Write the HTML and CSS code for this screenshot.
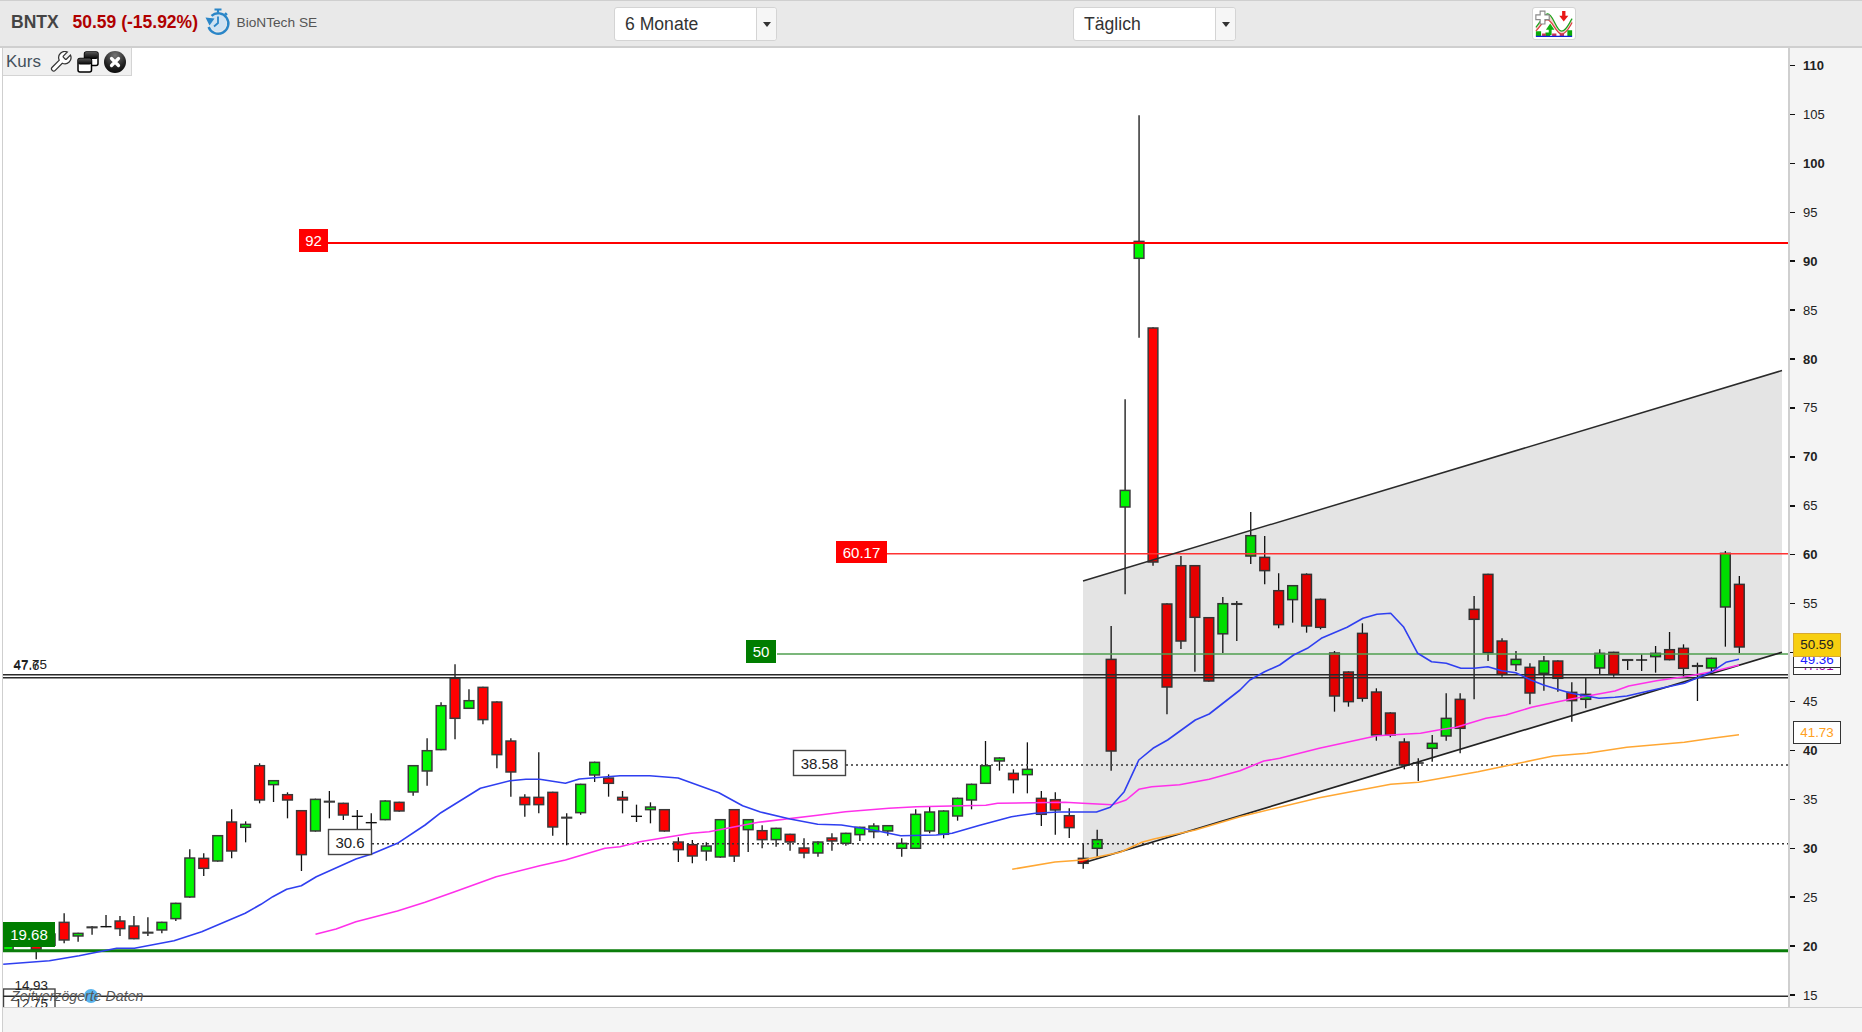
FILE: index.html
```html
<!DOCTYPE html>
<html lang="de">
<head>
<meta charset="utf-8">
<title>BNTX</title>
<link rel="stylesheet" href="styles.css">
</head>
<body>
<div class="app">
  <header class="topbar">
    <div class="quote">
      <b class="symbol">BNTX</b>
      <b class="price">50.59 (-15.92%)</b>
      <svg class="watch" viewBox="0 0 26 28" aria-hidden="true">
        <circle class="watch-face" cx="13" cy="15" r="8.5"/>
        <path class="watch-ring" d="M6.5 7.8A10.2 10.2 0 1 1 3.6 19"/>
        <path class="watch-hand" d="M13 8.5V15L9 18.5"/>
        <path class="watch-knob" d="M9.5 1.5h7M13 1.5v3M20 5l2 2"/>
        <path class="watch-arrow" d="M0.5 9.5L9.5 10.5 4.5 17.5z"/>
      </svg>
      <span class="company">BioNTech SE</span>
    </div>
    <div class="select"><span class="select-text">6 Monate</span><span class="select-arrow"></span></div>
    <div class="select select-second"><span class="select-text">Täglich</span><span class="select-arrow"></span></div>
    <div class="toolbtn">
      <svg viewBox="0 0 44 32" aria-hidden="true">
        <path class="ti-band" d="M3 20C8 14 11 7 15 6 21 5 24 24 30 24 35 24 38 15 41 11L41 15C38 20 35 27 30 27 24 27 21 13 15 12 11 12 8 19 3 24z"/>
        <path class="ti-green" d="M3 20C8 14 11 7 15 6 21 5 24 24 30 24 35 24 38 15 41 11"/>
        <path class="ti-red" d="M3 24C8 19 11 12 15 12 21 13 24 27 30 27 35 27 38 20 41 15"/>
        <path class="ti-cross" d="M7.500 3h5v4h4.500v5h-4.500v4.500h-5V12H3V7h4.500z"/>
        <path class="ti-down" d="M30.500 3h3.500v5h3L32.200 14 27.500 8h3z"/>
        <path class="ti-up" d="M16.500 28v-5.500h-3l4.500-6.500 4.500 6.500h-3V28z"/>
        <path class="ti-bar-g" d="M3 24h5.500v5H3zM13 25.500h5V29h-5zM36 23h5v6h-5z"/>
        <path class="ti-bar-r" d="M9.500 26.500h4V29h-4zM20 26.500h4.500V29H20zM28 26.500h4.500V29H28z"/>
        <path class="ti-base" d="M3 29.500h38"/>
      </svg>
    </div>
  </header>

  <main class="main">
    <section class="plot">
      <div class="panel-tools">
        <span class="panel-name">Kurs</span>
        <svg class="tool-icon" viewBox="1.500 1.500 21.500 21.500" aria-hidden="true"><path class="wrench" d="M14.7 6.3a1 1 0 0 0 0 1.4l1.6 1.6a1 1 0 0 0 1.4 0l3.77-3.77a6 6 0 0 1-7.94 7.94l-6.91 6.91a2.12 2.12 0 0 1-3-3l6.91-6.91a6 6 0 0 1 7.94-7.94l-3.76 3.76z"/></svg>
        <svg class="tool-icon" viewBox="0 0 22 22" aria-hidden="true">
          <defs>
            <linearGradient id="winTop" x1="0" y1="0" x2="0" y2="1"><stop offset="0" stop-color="#555"/><stop offset="1" stop-color="#000"/></linearGradient>
            <radialGradient id="closeBg" cx="0.5" cy="0.2" r="0.9"><stop offset="0" stop-color="#777"/><stop offset="0.6" stop-color="#222"/><stop offset="1" stop-color="#000"/></radialGradient>
          </defs>
          <rect class="win-frame" x="7.500" y="1" width="13.500" height="13.500" rx="2"/>
          <rect class="win-title" x="7.500" y="1" width="13.500" height="7" rx="2"/>
          <rect class="win-frame" x="1" y="7.500" width="13.500" height="13.500" rx="2"/>
          <rect class="win-title" x="1" y="7.500" width="13.500" height="6" rx="2"/>
        </svg>
        <svg class="tool-icon" viewBox="0 0 22 22" aria-hidden="true">
          <circle class="close-bg" cx="11" cy="11" r="11"/>
          <path class="close-x" d="M7.500 7.500l7 7M14.500 7.500l-7 7"/>
        </svg>
      </div>

      <svg class="chart" viewBox="3 48 1785 959" aria-label="Kursdiagramm">
        <g id="candles"></g>
        <polygon class="channel" points="1083,581 1782,370.500 1782,652.300 1083,863"/>

        <path class="lvl-red-strong" d="M328 243H1788"/>
        <path class="lvl-red-thin" d="M887 553.700H1788"/>
        <path class="lvl-green-thin" d="M777 654H1788"/>
        <path class="lvl-green-strong" d="M3 950.700H1788"/>
        <path class="lvl-black" d="M3 674.800H1788M3 677.800H1788M3 996.300H1788"/>
        <path class="lvl-dot" d="M846 765H1788M372 843.700H1788"/>
        <path class="trend" d="M1083 581L1782 370.500"/>
        <path class="trend trend-low" d="M1083 863L1782 652.300"/>

        <polyline id="ind-orange" class="ind ind-orange"/>
        <polyline id="ind-magenta" class="ind ind-magenta"/>
        <polyline id="ind-blue" class="ind ind-blue"/>

        <rect class="tag-red" x="299" y="229" width="29" height="23"/>
        <text class="tag-text tag-white" x="313.500" y="246">92</text>
        <rect class="tag-red" x="836" y="541" width="51" height="22"/>
        <text class="tag-text tag-white" x="861.500" y="557.500">60.17</text>
        <rect class="tag-green" x="746" y="640" width="30" height="23"/>
        <text class="tag-text tag-white" x="761" y="657">50</text>
        <rect class="tag-green" x="3" y="922" width="52" height="25"/>
        <text class="tag-text tag-white" x="29" y="940">19.68</text>
        <rect class="tag-box" x="793.500" y="750.500" width="52" height="25"/>
        <text class="tag-text" x="819.500" y="768.500">38.58</text>
        <rect class="tag-box" x="328.500" y="829.500" width="43" height="25"/>
        <text class="tag-text" x="350" y="847.500">30.6</text>

        <text class="low-text" x="13.500" y="668.500">47.75</text>
        <text class="low-text" x="13.500" y="670">47.6</text>

        <rect class="tag-box" x="3.500" y="989" width="51.500" height="30"/>
        <path class="lvl-black" d="M3 996.300H55"/>
        <text class="low-text" x="14.500" y="990">14.93</text>
        <text class="low-text" x="14.500" y="1007.500">12.75</text>
        <circle class="info-dot" cx="91" cy="996" r="7"/>
        <text class="delay-text" x="11" y="1000.800">Zeitverzögerte Daten</text>
      </svg>
    </section>

    <aside class="axis">
      <ul class="ticks">
        <li class="tick major">110</li>
        <li class="tick">105</li>
        <li class="tick major">100</li>
        <li class="tick">95</li>
        <li class="tick major">90</li>
        <li class="tick">85</li>
        <li class="tick major">80</li>
        <li class="tick">75</li>
        <li class="tick major">70</li>
        <li class="tick">65</li>
        <li class="tick major">60</li>
        <li class="tick">55</li>
        <li class="tick major">50</li>
        <li class="tick">45</li>
        <li class="tick major">40</li>
        <li class="tick">35</li>
        <li class="tick major">30</li>
        <li class="tick">25</li>
        <li class="tick major">20</li>
        <li class="tick">15</li>
      </ul>
      <div class="ptag ptag-purple">47.91</div>
      <div class="ptag ptag-blue">49.36</div>
      <div class="ptag ptag-gold">50.59</div>
      <div class="ptag ptag-orange">41.73</div>
    </aside>
  </main>

  <footer class="footer"></footer>
</div>
<script src="chart.js"></script>
</body>
</html>
```
FILE: styles.css
```css
* { box-sizing: border-box; }
html, body { margin: 0; padding: 0; background: #fff; }
body { font-family: "Liberation Sans", Arial, sans-serif; color: #333; overflow: hidden; }
.app { width: 1862px; height: 1032px; display: flex; flex-direction: column; }

.topbar {
  height: 48px; flex: none; background: #e9e9e9;
  border-top: 1px solid #cfcfcf; border-bottom: 2px solid #cfcfcf;
  display: grid;
  grid-template-columns: 614px 163px 296px 163px 296px 44px;
  grid-template-areas: "q s1 . s2 . b";
  align-items: start;
}
.quote { grid-area: q; display: flex; align-items: center; height: 43px; padding-left: 11px; }
.symbol { font-size: 17.500px; color: #444; width: 61.500px; }
.price { font-size: 17.500px; color: #b00000; white-space: nowrap; width: 133px; }
.watch { width: 26px; height: 28px; flex: none; margin-top: -1px; margin-left: -1px; }
.watch-face { fill: #cfe2f2; }
.watch-ring { fill: none; stroke: #2a86c8; stroke-width: 2.400; }
.watch-hand { fill: none; stroke: #2a86c8; stroke-width: 1.800; }
.watch-knob { fill: none; stroke: #2a86c8; stroke-width: 2.200; }
.watch-arrow { fill: #2a86c8; }
.company { font-size: 13.700px; color: #555; margin-left: 6px; }

.select {
  grid-area: s1; margin-top: 6px; height: 34px; display: flex;
  background: #fff; border: 1px solid #d4d4d4; border-radius: 3px;
  font-size: 17.600px; color: #333;
}
.select-second { grid-area: s2; }
.select-text { width: 141px; padding-left: 10px; line-height: 32px; }
.select-arrow {
  flex: 1; border-left: 1px solid #d4d4d4; background: #f6f6f6; position: relative;
  border-radius: 0 3px 3px 0;
}
.select-arrow::after {
  content: ""; position: absolute; left: 5.500px; top: 14px;
  border-left: 4px solid transparent; border-right: 4px solid transparent; border-top: 5px solid #333;
}

.toolbtn {
  grid-area: b; margin-top: 6px; height: 33px; width: 44px;
  background: #fff; border: 1px solid #d4d4d4; border-radius: 3px;
}
.toolbtn svg { display: block; width: 42px; height: 31px; }
.ti-band { fill: #f6d0d0; }
.ti-green { fill: none; stroke: #1aa51a; stroke-width: 1.300; }
.ti-red { fill: none; stroke: #d84040; stroke-width: 1.300; }
.ti-cross { fill: #fff; stroke: #8a8a8a; stroke-width: 1.200; }
.ti-down { fill: #e81818; }
.ti-up { fill: #10b010; }
.ti-bar-g { fill: #0aa80a; }
.ti-bar-r { fill: #cc3355; }
.ti-base { fill: none; stroke: #1020d8; stroke-width: 1.100; }

.main { flex: 1; display: flex; min-height: 0; padding-left: 2px; background: #fff; }
.plot { position: relative; width: 1786px; flex: none; border-left: 1px solid #cfcfcf; }
.chart { display: block; width: 1785px; height: 959px; overflow: hidden; }

.panel-tools {
  position: absolute; left: 0; top: 0; z-index: 2;
  width: 129px; height: 28px; display: flex; align-items: center;
  background: #f0f0f0; border-right: 1px solid #d4d4d4; border-bottom: 1px solid #d4d4d4;
  padding-left: 3px;
}
.panel-name { font-size: 17px; color: #44505c; width: 46px; }
.tool-icon { width: 22px; height: 22px; flex: none; margin-right: 5px; }
.wrench { fill: #fff; stroke: #333; stroke-width: 1.200; }
.win-frame { fill: #fff; stroke: #000; stroke-width: 1.500; }
.win-title { fill: url(#winTop); }
.close-bg { fill: url(#closeBg); }
.close-x { fill: none; stroke: #fff; stroke-width: 3.200; stroke-linecap: round; }

.channel { fill: rgba(0, 0, 0, 0.105); }
.lvl-red-strong { stroke: #f00; stroke-width: 2; fill: none; }
.lvl-red-thin { stroke: #f33; stroke-width: 1.400; fill: none; }
.lvl-green-thin { stroke: #4f9f4f; stroke-width: 1.600; fill: none; }
.lvl-green-strong { stroke: #0a7d0a; stroke-width: 3; fill: none; }
.lvl-black { stroke: #2a2a2a; stroke-width: 1.400; fill: none; }
.lvl-dot { stroke: #333; stroke-width: 1.500; stroke-dasharray: 2 3; fill: none; }
.trend { stroke: #2a2a2a; stroke-width: 1.500; fill: none; }
.trend-low { stroke-width: 1.700; stroke: #222; }

.ind { fill: none; stroke-width: 1.600; stroke-linejoin: round; }
.ind-blue { stroke: #2f3ff0; }
.ind-magenta { stroke: #ff30ea; }
.ind-orange { stroke: #ffa733; }

.wick { stroke: #111; stroke-width: 1.300; }
.body { stroke: #3a3a3a; stroke-width: 1.500; }
.body-g { fill: #00f800; }
.body-r { fill: #f00; }
.body-w { fill: #fff; }
.doji { stroke: #111; stroke-width: 1.400; }

.tag-red { fill: #f00; }
.tag-green { fill: #007d00; }
.tag-box { fill: #fff; stroke: #444; stroke-width: 1.400; }
.tag-text { font-size: 15px; text-anchor: middle; fill: #222; }
.tag-white { fill: #fff; }
.low-text { font-size: 13.400px; fill: #222; }
.info-dot { fill: #58b4ee; }
.delay-text { font-size: 14.200px; font-style: italic; fill: #555; }

.axis { position: relative; flex: 1; background: #f4f4f4; border-left: 2px solid #cfcfcf; overflow: hidden; }
.ticks { list-style: none; margin: -6.950px 0 0; padding: 0; }
.tick {
  height: 48.930px; display: flex; align-items: center; gap: 8px;
  font-size: 13px; color: #222;
}
.tick::before { content: ""; width: 5px; height: 1.500px; background: #111; }
.tick.major { font-weight: bold; }

.ptag {
  position: absolute; left: 3px; width: 48px; text-align: center;
  font-size: 13.400px; background: #fff; border: 1.500px solid #333;
}
.ptag-purple { top: 607px; height: 20px; line-height: 20px; color: #a000a0; }
.ptag-blue { top: 600px; height: 20px; line-height: 22px; color: #2020ff; }
.ptag-gold { top: 585px; height: 24px; line-height: 21px; color: #222; background: #f7cf10; border-color: #d8a830; }
.ptag-orange { top: 673px; height: 23px; line-height: 21px; color: #ffa020; }

.footer { height: 25px; flex: none; background: #f4f4f4; border-top: 1px solid #cfcfcf; margin-left: 2px; border-left: 1px solid #cfcfcf; }
```
FILE: chart.js
```js
(function () {
  var NS = 'http://www.w3.org/2000/svg';
  var host = document.getElementById('candles');
  var X0 = 8, STEP = 13.96;

  function add(tag, cls, attrs) {
    var el = document.createElementNS(NS, tag);
    el.setAttribute('class', cls);
    for (var k in attrs) el.setAttribute(k, attrs[k]);
    host.appendChild(el);
  }

  // [wickTop, bodyTop, bodyBottom, wickBottom, kind]; y = base + v / k
  var groups = [
    { from: 0, base: 640, k: 3, rows: [
      [905,905,932,932,'g'],[890,890,921,921,'w'],[900,900,930,958,'r'],[880,880,918,918,'w'],
      [820,845,902,910,'r'],[878,878,890,905,'g'],[858,859,863,884,'r'],[825,860,860,862,'k'],
      [828,841,868,888,'r'],[828,856,898,898,'r'],[832,875,878,888,'r'],[845,845,872,880,'g'],
      [788,788,838,843,'g'],[628,652,773,773,'g'],[640,653,687,708,'r'],[585,585,665,665,'g'],
      [508,544,635,655,'r'],[544,551,564,607,'g'],[370,375,482,490,'r'],[420,420,436,486,'g'],
      [457,462,482,535,'r'],[510,510,646,693,'r'],[476,476,575,575,'g'],[453,482,485,535,'r'],
      [488,488,527,540,'r'],[510,529,529,580,'k'],[520,548,548,640,'k'],[481,481,541,541,'g'],
      [485,485,515,515,'r'],[375,375,458,467,'g'],[295,330,395,437,'g'],[187,195,331,331,'g'],
      [73,113,237,298,'r'],[148,180,207,207,'g'],[140,140,241,253,'r'],[184,184,346,385,'r'],
      [295,301,398,470,'r'],[463,470,496,530,'r'],[337,470,496,520,'r'],[455,455,563,587,'r'],
      [520,530,533,616,'g'],[431,431,520,524,'g'],[365,365,407,426,'g'],[403,412,432,470,'r'],
      [453,470,482,520,'r'],[494,529,529,546,'k'],[487,499,511,550,'g'],[507,507,575,575,'r'],
      [592,604,631,666,'r'],[600,612,650,670,'r'],[607,616,635,662,'g'],[537,537,653,653,'g'],
      [507,507,650,666,'r'],[537,537,571,636,'g'],[556,570,601,625,'r'],[563,563,601,620,'g'],
      [581,581,608,632,'r'],[595,622,641,655,'r'],[604,604,641,650,'g'],[580,592,605,632,'r'],
      [578,578,612,617,'g'],[560,560,586,603,'g'],[550,556,577,595,'g'],[555,555,575,587,'g'],
      [595,608,627,650,'g'],[508,521,627,627,'g'],[498,514,575,580,'g'],[511,511,585,595,'g'],
      [473,473,530,542,'g'],[431,431,482,508,'g'],[303,375,432,432,'g'],[352,352,365,392,'g'],
      [388,398,421,460,'r'],[307,386,406,460,'g'],[453,473,525,558,'r'],[457,477,512,584,'r'],
      [505,525,565,594,'r'],[610,653,672,686,'r'],[569,597,627,650,'g']
    ]},
    { from: 79, base: 0, k: 1, rows: [
      [626,658.7,751.7,770.7,'r'],[399.3,489.7,507.7,594.3,'g'],[115.3,240.7,259,337.7,'g'],
      [327.3,327.3,562.7,565.7,'r'],[603.3,603.3,687.7,714.3,'r'],[556,565,641.7,649,'r'],
      [565,565,618,671.7,'r'],[617,617,681.7,681.7,'r'],[597,603,634.5,653,'g'],
      [601,603,605,641,'g'],[512,535,556.7,564,'g']
    ]},
    { from: 90, base: 500, k: 3, rows: [
      [108,170,214,253,'r'],[220,270,376,385,'r'],[255,255,301,368,'g'],[220,221,380,398,'r'],
      [296,296,384,388,'r'],[453,457,590,635,'r'],[514,514,607,620,'r'],[370,398,597,605,'r'],
      [565,574,707,722,'r'],[637,637,707,712,'r'],[715,724,797,808,'r'],[775,789,789,843,'k'],
      [705,728,747,785,'g'],[580,653,710,722,'g'],[580,596,687,760,'r'],[288,326,360,598,'r'],
      [221,221,460,483,'r'],[415,421,525,530,'r'],[453,476,496,513,'g'],[490,500,581,613,'r'],
      [468,481,522,572,'g'],[481,481,537,575,'r'],[547,575,604,665,'r'],[533,581,600,625,'g'],
      [448,458,506,525,'g'],[455,455,525,530,'r'],[477,477,481,510,'g'],[463,480,480,513,'k'],
      [438,458,472,518,'g'],[396,447,481,481,'r'],[433,443,507,530,'r'],[488,495,498,603,'g'],
      [473,473,506,520,'g'],[153,158,323,440,'g'],[228,251,443,460,'r']
    ]}
  ];

  groups.forEach(function (g) {
    g.rows.forEach(function (r, n) {
      var cx = X0 + STEP * (g.from + n) + 0.3;
      var y = r.slice(0, 4).map(function (v) { return g.base + v / g.k; });
      add('line', 'wick', { x1: cx, x2: cx, y1: y[0], y2: y[3] });
      if (r[4] === 'k') {
        add('line', 'doji', { x1: cx - 5.5, x2: cx + 5.5, y1: y[1], y2: y[1] });
      } else {
        add('rect', 'body body-' + r[4], {
          x: cx - 4.85, width: 9.7, y: y[1] + 0.7, height: Math.max(y[2] - y[1] - 1.4, 0.6)
        });
      }
    });
  });

  // Indicator traces read from three crops: [xOffset, xScale, yBase, points]
  function trace(id, parts) {
    var pts = [];
    parts.forEach(function (p) {
      for (var i = 0; i < p[3].length; i += 2) {
        pts.push((p[0] + p[3][i] / p[1]).toFixed(1) + ',' + (p[2] + p[3][i + 1] / 3).toFixed(1));
      }
    });
    document.getElementById(id).setAttribute('points', pts.join(' '));
  }
  var A = [0, 2.529, 640], B = [620, 2.529, 640], C = [1240, 2.521, 500];
  function seg(o, pts) { return [o[0], o[1], o[2], pts]; }

  trace('ind-blue', [
    seg(A, [8,973,125,962,200,947,295,925,340,925,440,902,510,875,620,820,660,793,690,770,725,748,762,737,800,710,900,657,940,642,1005,610,1075,555,1115,518,1215,445,1290,422,1330,418,1365,418,1430,430,1465,417,1568,407]),
    seg(B, [75,407,147,414,250,458,310,497,355,516,430,537,500,553,560,555,640,570,710,587,800,585,840,580,910,556,990,530,1050,520,1110,516,1205,516,1240,502,1275,455,1312,360,1348,325,1385,300,1455,240,1490,222,1568,150]),
    seg(C, [25,540,62,515,100,495,135,465,170,445,205,415,270,382,310,355,345,343,380,340,412,380,448,460,483,485,520,490,557,505,590,505,625,500,660,512,695,518,733,540,765,555,800,568,835,580,905,595,945,592,975,588,1050,568,1120,550,1190,515,1225,487,1258,478])
  ]);
  trace('ind-magenta', [
    seg(A, [798,883,850,867,900,845,1005,813,1075,787,1150,755,1255,710,1365,677,1430,660,1530,625,1568,620]),
    seg(B, [50,605,180,580,225,575,350,547,500,526,570,515,680,505,750,500,925,496,955,490,1125,487,1170,490,1245,494,1280,480,1312,448,1345,440,1415,434,1490,418,1568,392]),
    seg(C, [60,783,100,775,200,745,345,707,455,700,500,690,545,682,620,655,670,645,735,622,835,597,945,573,980,558,1050,542,1120,530,1190,515,1258,495])
  ]);
  trace('ind-orange', [
    seg(B, [992,688,1100,666,1170,660,1265,637,1320,607,1350,597,1455,570,1568,530]),
    seg(C, [200,893,380,853,450,847,600,815,750,778,790,768,875,760,975,742,1120,727,1190,715,1258,704])
  ]);
})();
```
